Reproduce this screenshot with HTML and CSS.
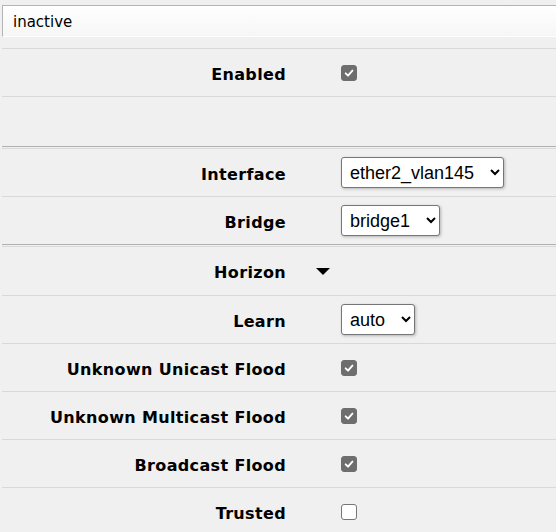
FILE: index.html
```html
<!DOCTYPE html>
<html>
<head>
<meta charset="utf-8">
<link rel="stylesheet" href="styles.css">
</head>
<body>
<div class="page">
  <div class="status">inactive</div>
  <div class="form">
    <div class="row">
      <div class="label">Enabled</div>
      <div class="control"><span class="cb checked"><svg viewBox="0 0 16 16" width="16" height="16"><path d="M4.2 8.4 L6.9 11 L11.9 5.3" fill="none" stroke="#fff" stroke-width="2.2" stroke-linecap="round" stroke-linejoin="round"/></svg></span></div>
    </div>
    <div class="row empty"></div>
    <div class="row sep">
      <div class="label">Interface</div>
      <div class="control"><select class="sel"><option>ether2_vlan145</option></select></div>
    </div>
    <div class="row">
      <div class="label">Bridge</div>
      <div class="control"><select class="sel"><option>bridge1</option></select></div>
    </div>
    <div class="row sep sep2">
      <div class="label">Horizon</div>
      <div class="control"><span class="tri"></span></div>
    </div>
    <div class="row">
      <div class="label">Learn</div>
      <div class="control"><select class="sel"><option>auto</option></select></div>
    </div>
    <div class="row">
      <div class="label">Unknown Unicast Flood</div>
      <div class="control"><span class="cb checked"><svg viewBox="0 0 16 16" width="16" height="16"><path d="M4.2 8.4 L6.9 11 L11.9 5.3" fill="none" stroke="#fff" stroke-width="2.2" stroke-linecap="round" stroke-linejoin="round"/></svg></span></div>
    </div>
    <div class="row">
      <div class="label">Unknown Multicast Flood</div>
      <div class="control"><span class="cb checked"><svg viewBox="0 0 16 16" width="16" height="16"><path d="M4.2 8.4 L6.9 11 L11.9 5.3" fill="none" stroke="#fff" stroke-width="2.2" stroke-linecap="round" stroke-linejoin="round"/></svg></span></div>
    </div>
    <div class="row">
      <div class="label">Broadcast Flood</div>
      <div class="control"><span class="cb checked"><svg viewBox="0 0 16 16" width="16" height="16"><path d="M4.2 8.4 L6.9 11 L11.9 5.3" fill="none" stroke="#fff" stroke-width="2.2" stroke-linecap="round" stroke-linejoin="round"/></svg></span></div>
    </div>
    <div class="row">
      <div class="label">Trusted</div>
      <div class="control"><span class="cb"></span></div>
    </div>
  </div>
</div>
</body>
</html>
```

FILE: styles.css
```css
html, body {
  margin: 0;
  padding: 0;
  background: #f0f0f0;
}
body {
  font-family: "DejaVu Sans", Verdana, sans-serif;
  color: #000;
}
.page {
  padding: 5px 0 0 2px;
}
.status {
  height: 30px;
  border-top: 1px solid #b4b4b4;
  border-left: 1px solid #b4b4b4;
  border-bottom: 1px solid #ffffff;
  background: linear-gradient(#ffffff, #f6f6f6);
  font-size: 15px;
  line-height: 32px;
  padding-left: 10px;
  margin-bottom: 11px;
}
.form {
  display: flex;
  flex-direction: column;
}
.row {
  display: flex;
  align-items: center;
  height: 47px;
  border-top: 1px solid #d9d9d9;
}
.row.empty {
  height: 49px;
}
.row.sep {
  border-top: 1px solid #b0b0b0;
  box-shadow: inset 0 1px 0 #f0f0f0, inset 0 2px 0 #d9d9d9;
  height: 47px;
  padding-top: 2px;
}
.row.sep2 {
  height: 48px;
}
.label {
  width: 284px;
  text-align: right;
  font-weight: bold;
  font-size: 16px;
  letter-spacing: 0.35px;
  padding-top: 3px;
}
.control {
  margin-left: 55px;
  display: flex;
  align-items: center;
}
.cb {
  display: inline-block;
  box-sizing: border-box;
  width: 16px;
  height: 16px;
  border: 1px solid #767676;
  border-radius: 3px;
  background: #fff;
}
.cb.checked {
  background: #6e6e6e;
  border-color: #6e6e6e;
}
.cb svg {
  display: block;
  width: 14px;
  height: 14px;
}
.sel {
  font-family: "Liberation Sans", Arial, sans-serif;
  font-size: 18px;
  height: 31px;
  padding: 0 12px 0 4px;
  border: 1px solid #767676;
  border-radius: 3px;
  background: #fff;
  box-shadow: 1px 1px 3px rgba(0,0,0,0.25);
  color: #000;
}
.tri {
  display: inline-block;
  width: 0;
  height: 0;
  border-left: 7px solid transparent;
  border-right: 7px solid transparent;
  border-top: 7px solid #000;
  margin-left: -25px;
}
```
